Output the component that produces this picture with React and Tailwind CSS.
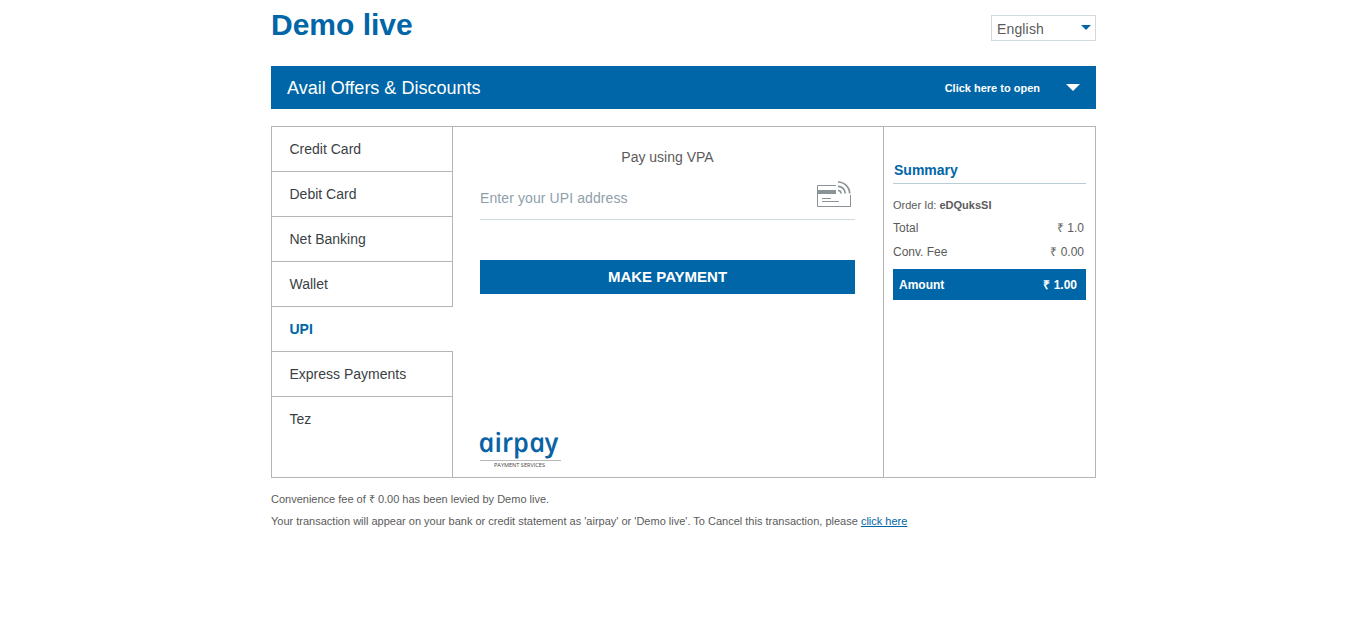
import React from "react";

const methods = ["Credit Card", "Debit Card", "Net Banking", "Wallet", "UPI", "Express Payments", "Tez"];

function CardIcon() {
  return (
    <svg width="34" height="26" viewBox="0 0 34 26" fill="none" stroke="#8a9497" className="block">
      <path d="M19 4.5H.5v21h33V14" />
      <path d="M0 9h19v4H0z" fill="#8a9497" stroke="none" />
      <path d="M5 17.5h9M5 20.5h17" />
      <path d="M21 9.5a3 3 0 0 1 3 3M21 5.3a7.2 7.2 0 0 1 7.2 7.2M21 1a11.7 11.7 0 0 1 11.7 11.5" strokeWidth="1.7" />
    </svg>
  );
}

function AirpayLogo() {
  return (
    <svg width="82" height="38" viewBox="0 0 82 38" className="block overflow-visible">
      <text
        transform="translate(0 20) skewX(12)"
        textLength="80"
        lengthAdjust="spacingAndGlyphs"
        className="fill-[#0a63a5] font-['Open_Sans',sans-serif] text-[27px] font-semibold italic"
      >
        airpay
      </text>
      <path d="M0 28.5h81" stroke="#b9b9b9" />
      <text
        x="14"
        y="35"
        textLength="51"
        lengthAdjust="spacingAndGlyphs"
        className="fill-[#444444] font-['Open_Sans',sans-serif] text-[5px]"
      >
        PAYMENT SERVICES
      </text>
    </svg>
  );
}

function Methods({ active }) {
  return (
    <nav className="flex w-[181px] flex-col">
      {methods.map((name, i) => {
        const last = i === methods.length - 1;
        const on = name === active;
        return (
          <a
            key={name}
            className={
              "flex pl-[17.5px] pt-[12px] text-[14px] leading-5 " +
              (last ? "grow " : "h-[45px] shrink-0 border-b border-b-[#b5b5b5] ") +
              (on ? "font-bold text-[#0066a7]" : "border-r border-r-[#b5b5b5] text-[#3b3f45]")
            }
          >
            {name}
          </a>
        );
      })}
    </nav>
  );
}

export default function App() {
  return (
    <div className="min-h-[618px] bg-white font-['Liberation_Sans',Arial,sans-serif] text-[#5b5b5b]">
      <div className="ml-[271px] w-[825px]">
        <header className="flex h-[66px] justify-between">
          <h1 className="pt-[7px] text-[30px] font-bold leading-[36px] text-[#0066a7]">Demo live</h1>
          <div className="mt-[15px] flex h-[26px] w-[105px] items-center justify-between border border-[#cfdade] pl-[5px] pr-1">
            <span className="pt-[2px] text-[14px] leading-5 tracking-[0.15px]">English</span>
            <svg width="10" height="5" viewBox="0 0 10 5" className="mb-[2px]">
              <path d="M0 0h10L5 5z" fill="#0066a7" />
            </svg>
          </div>
        </header>

        <div className="flex h-[43px] items-center bg-[#0066a7] pl-4 pr-4 text-white">
          <span className="grow text-[18px] leading-6">Avail Offers &amp; Discounts</span>
          <span className="text-[11px] font-bold leading-4">Click here to open</span>
          <svg width="14" height="7" viewBox="0 0 14 7" className="ml-[26px]">
            <path d="M0 0h14L7 7z" fill="#fff" />
          </svg>
        </div>

        <main className="mt-[17px] flex h-[352px] border border-[#b5b5b5]">
          <Methods active="UPI" />

          <section className="flex w-[430px] flex-col pl-[27px] pr-7">
            <h2 className="mt-5 text-center text-[14px] leading-5">Pay using VPA</h2>
            <div className="mt-[14px] flex h-[39px] justify-between border-b border-[#cfdade] pr-1">
              <span className="pt-[7px] text-[14px] leading-5 tracking-[0.1px] text-[#8fa0ab]">Enter your UPI address</span>
              <CardIcon />
            </div>
            <button className="mt-10 h-[34px] bg-[#0066a7] pt-px text-[15px] font-bold text-white">MAKE PAYMENT</button>
            <div className="mt-auto pb-[7px]">
              <AirpayLogo />
            </div>
          </section>

          <aside className="grow border-l border-[#b5b5b5] pl-[9px] pr-[9px] pt-[33px] text-[12px]">
            <h3 className="border-b border-[#b9ccd8] pb-[3px] pl-px text-[14px] font-bold leading-5 text-[#0066a7]">Summary</h3>
            <p className="mt-[13px] text-[11px] leading-4">
              Order Id: <b>eDQuksSI</b>
            </p>
            <div className="mt-[7px] flex justify-between pr-[2px] leading-4">
              <span>Total</span>
              <span>₹ 1.0</span>
            </div>
            <div className="mt-2 flex justify-between pr-[2px] leading-4">
              <span>Conv. Fee</span>
              <span>₹ 0.00</span>
            </div>
            <div className="mt-[9px] flex h-[31px] items-center justify-between bg-[#0066a7] pl-[6px] pr-[9px] font-bold leading-4 text-white">
              <span>Amount</span>
              <span>₹ 1.00</span>
            </div>
          </aside>
        </main>

        <footer className="pt-[13px] text-[11px] leading-[16px]">
          <p>Convenience fee of ₹ 0.00 has been levied by Demo live.</p>
          <p className="mt-[6px]">
            Your transaction will appear on your bank or credit statement as 'airpay' or 'Demo live'. To Cancel this
            transaction, please <a className="text-[#0066a7] underline">click here</a>
          </p>
        </footer>
      </div>
    </div>
  );
}
